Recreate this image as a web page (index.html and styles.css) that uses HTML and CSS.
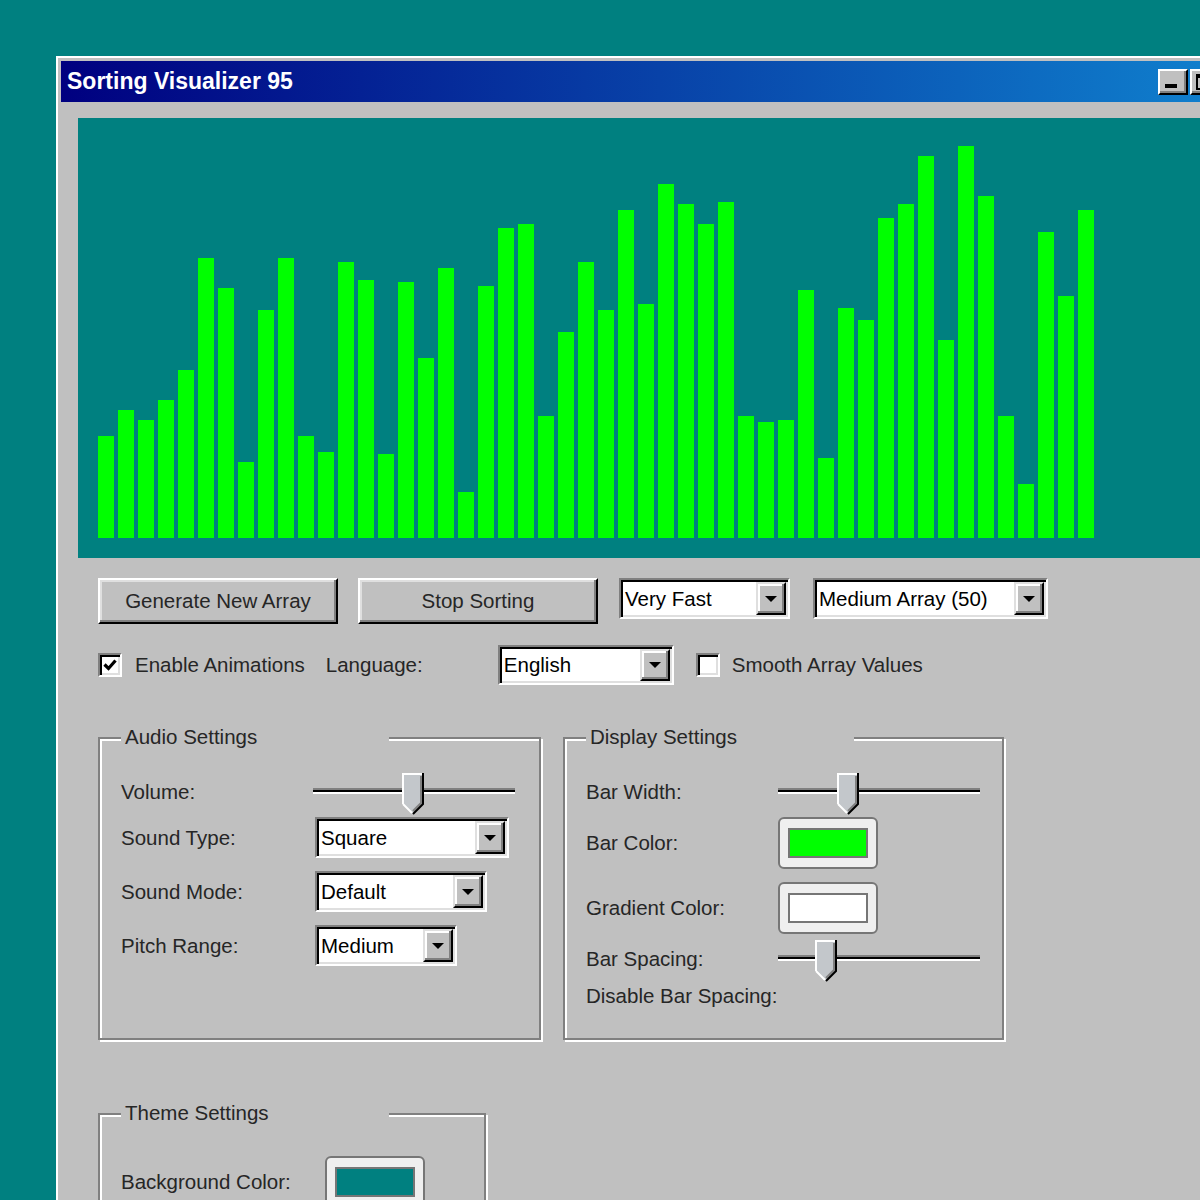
FILE: index.html
```html
<!DOCTYPE html>
<html lang="en">
<head>
    <meta charset="UTF-8">
    <meta name="viewport" content="width=device-width, initial-scale=1.0">
    <title>Sorting Visualizer 95</title>
    <link rel="stylesheet" href="styles.css">
</head>
<body>
    <div class="window">
        <div class="title-bar">
            <span class="title">Sorting Visualizer 95</span>
            <div class="title-buttons">
                <button class="title-btn" type="button"><span class="glyph-min"></span></button>
                <button class="title-btn" type="button"><span class="glyph-max"></span></button>
                <button class="title-btn title-close" type="button">
                    <svg width="14" height="12" viewBox="0 0 14 12"><path d="M2 1L12 11M12 1L2 11" stroke="#000" stroke-width="3"/></svg>
                </button>
            </div>
        </div>
        <div class="window-body">
            <div class="canvas" id="bars"></div>

            <div class="panel">
                <div class="row-actions">
                    <button class="btn" type="button">Generate New Array</button>
                    <button class="btn" type="button">Stop Sorting</button>
                    <div class="select select-speed"><span class="select-value">Very Fast</span><span class="select-arrow"></span></div>
                    <div class="select select-size"><span class="select-value">Medium Array (50)</span><span class="select-arrow"></span></div>
                </div>

                <div class="row-options">
                    <label class="check">
                        <span class="check-box">
                            <svg width="16" height="16" viewBox="0 0 16 16"><path d="M2.5 7.5L6.5 11.5L13.5 3.5" fill="none" stroke="#000" stroke-width="3.2"/></svg>
                        </span>
                        Enable Animations
                    </label>
                    <span class="lang-label">Language:</span>
                    <div class="select select-lang"><span class="select-value">English</span><span class="select-arrow"></span></div>
                    <label class="check check-smooth">
                        <span class="check-box"></span>
                        Smooth Array Values
                    </label>
                </div>

                <div class="groups">
                    <div class="group group-audio">
                        <span class="legend">Audio Settings</span>
                        <div class="fields">
                            <div class="field field-slider">
                                <span class="field-label">Volume:</span>
                                <div class="slider">
                                    <div class="slider-track"></div>
                                    <svg class="slider-thumb" style="left: 89px" width="22" height="42" viewBox="0 0 22 42">
                                        <path d="M1 1H21V31L11 41L1 31Z" fill="#c3c7cb"/>
                                        <path d="M1 31V1H20" fill="none" stroke="#fff" stroke-width="2"/>
                                        <path d="M19 3V30L11 38" fill="none" stroke="#808080" stroke-width="2"/>
                                        <path d="M21 0V31L11 41" fill="none" stroke="#000" stroke-width="2"/>
                                        <path d="M1 31L10 40" fill="none" stroke="#fff" stroke-width="2"/>
                                    </svg>
                                </div>
                            </div>
                            <div class="field">
                                <span class="field-label">Sound Type:</span>
                                <div class="select select-type"><span class="select-value">Square</span><span class="select-arrow"></span></div>
                            </div>
                            <div class="field">
                                <span class="field-label">Sound Mode:</span>
                                <div class="select select-mode"><span class="select-value">Default</span><span class="select-arrow"></span></div>
                            </div>
                            <div class="field">
                                <span class="field-label">Pitch Range:</span>
                                <div class="select select-pitch"><span class="select-value">Medium</span><span class="select-arrow"></span></div>
                            </div>
                        </div>
                    </div>

                    <div class="group group-display">
                        <span class="legend">Display Settings</span>
                        <div class="fields">
                            <div class="field field-slider">
                                <span class="field-label">Bar Width:</span>
                                <div class="slider">
                                    <div class="slider-track"></div>
                                    <svg class="slider-thumb" style="left: 59px" width="22" height="42" viewBox="0 0 22 42">
                                        <path d="M1 1H21V31L11 41L1 31Z" fill="#c3c7cb"/>
                                        <path d="M1 31V1H20" fill="none" stroke="#fff" stroke-width="2"/>
                                        <path d="M19 3V30L11 38" fill="none" stroke="#808080" stroke-width="2"/>
                                        <path d="M21 0V31L11 41" fill="none" stroke="#000" stroke-width="2"/>
                                        <path d="M1 31L10 40" fill="none" stroke="#fff" stroke-width="2"/>
                                    </svg>
                                </div>
                            </div>
                            <div class="field">
                                <span class="field-label">Bar Color:</span>
                                <input class="color-input" type="color" value="#00ff00">
                            </div>
                            <div class="field">
                                <span class="field-label">Gradient Color:</span>
                                <input class="color-input" type="color" value="#ffffff">
                            </div>
                            <div class="field field-slider">
                                <span class="field-label">Bar Spacing:</span>
                                <div class="slider">
                                    <div class="slider-track"></div>
                                    <svg class="slider-thumb" style="left: 37px" width="22" height="42" viewBox="0 0 22 42">
                                        <path d="M1 1H21V31L11 41L1 31Z" fill="#c3c7cb"/>
                                        <path d="M1 31V1H20" fill="none" stroke="#fff" stroke-width="2"/>
                                        <path d="M19 3V30L11 38" fill="none" stroke="#808080" stroke-width="2"/>
                                        <path d="M21 0V31L11 41" fill="none" stroke="#000" stroke-width="2"/>
                                        <path d="M1 31L10 40" fill="none" stroke="#fff" stroke-width="2"/>
                                    </svg>
                                </div>
                            </div>
                            <div class="field field-text">
                                <span class="field-label">Disable Bar Spacing:</span>
                            </div>
                        </div>
                    </div>
                </div>

                <div class="group group-theme">
                    <span class="legend">Theme Settings</span>
                    <div class="fields">
                        <div class="field">
                            <span class="field-label">Background Color:</span>
                            <input class="color-input" type="color" value="#008080">
                        </div>
                    </div>
                </div>
            </div>
        </div>
    </div>

    <script>
        const heights = [102, 128, 118, 138, 168, 280, 250, 76, 228, 280,
                         102, 86, 276, 258, 84, 256, 180, 270, 46, 252,
                         310, 314, 122, 206, 276, 228, 328, 234, 354, 334,
                         314, 336, 122, 116, 118, 248, 80, 230, 218, 320,
                         334, 382, 198, 392, 342, 122, 54, 306, 242, 328];

        const canvas = document.getElementById('bars');
        heights.forEach(h => {
            const bar = document.createElement('div');
            bar.className = 'bar';
            bar.style.height = h + 'px';
            canvas.appendChild(bar);
        });
    </script>
</body>
</html>
```

FILE: styles.css
```css
html, body {
    overflow: hidden;
}
body {
    margin: 0;
    background-color: #008080;
    font-family: "Liberation Sans", Arial, sans-serif;
    font-size: 20.5px;
    color: #262626;
}
.window {
    box-sizing: border-box;
    width: 1207px;
    min-height: 1300px;
    margin: 56px 0 0 56px;
    padding: 3px;
    background-color: #c0c0c0;
    border: 2px solid;
    border-color: #fff #000 #000 #fff;
}
.title-bar {
    display: flex;
    align-items: center;
    justify-content: space-between;
    height: 41px;
    padding: 0 4px 0 6px;
    background: linear-gradient(90deg, #000080, #1084d0);
}
.title {
    color: #fff;
    font-weight: bold;
    font-size: 23px;
}
.title-buttons {
    display: flex;
    gap: 2px;
}
.title-btn {
    position: relative;
    box-sizing: border-box;
    width: 30px;
    height: 26px;
    padding: 0;
    background-color: #c0c0c0;
    border: 2px solid;
    border-color: #fff #000 #000 #fff;
    box-shadow: inset -2px -2px #808080;
    display: flex;
    align-items: center;
    justify-content: center;
}
.title-close {
    margin-left: 2px;
}
.glyph-min {
    position: absolute;
    left: 5px;
    bottom: 5px;
    width: 12px;
    height: 4px;
    background-color: #000;
}
.glyph-max {
    box-sizing: border-box;
    width: 18px;
    height: 16px;
    border: 2px solid #000;
    border-top-width: 4px;
}

.window-body {
    padding: 16px 0 0 17px;
}
.canvas {
    box-sizing: border-box;
    height: 440px;
    padding: 0 20px 20px;
    display: flex;
    align-items: flex-end;
    gap: 4px;
    background-color: #008080;
}
.bar {
    width: 16px;
    flex: none;
    background-color: #00ff00;
}

.panel {
    padding: 20px 0 0 20px;
}
.row-actions {
    display: flex;
    align-items: flex-start;
    gap: 20px;
}
.btn {
    box-sizing: border-box;
    width: 240px;
    height: 46px;
    background-color: #c0c0c0;
    border: 2px solid;
    border-color: #fff #000 #000 #fff;
    box-shadow: inset -2px -2px #808080, inset 2px 2px #dfdfdf;
    font-family: inherit;
    font-size: 20.5px;
    color: #262626;
    padding: 0;
}

/* win95 style drop down */
.select {
    box-sizing: border-box;
    display: flex;
    align-items: stretch;
    height: 41px;
    padding: 2px;
    background-color: #fff;
    border: 2px solid;
    border-color: #808080 #fff #fff #808080;
    box-shadow: inset 2px 2px #000, inset -2px -2px #dfdfdf;
}
.select-value {
    flex: 1;
    display: flex;
    align-items: center;
    padding-left: 2px;
    color: #000;
    white-space: nowrap;
    overflow: hidden;
}
.select-arrow {
    box-sizing: border-box;
    width: 30px;
    flex: none;
    background-color: #c0c0c0;
    border: 2px solid;
    border-color: #dfdfdf #000 #000 #dfdfdf;
    box-shadow: inset -2px -2px #808080, inset 2px 2px #fff;
    display: flex;
    align-items: center;
    justify-content: center;
}
.select-arrow::after {
    content: "";
    border-left: 6px solid transparent;
    border-right: 6px solid transparent;
    border-top: 6px solid #000;
}
.select-speed { width: 171px; margin-left: 1px; }
.select-size { width: 235px; margin-left: 3px; }
.select-lang { width: 176px; height: 40px; }
.select-type { width: 194px; margin-left: 2px; }
.select-mode { width: 172px; margin-left: 2px; }
.select-pitch { width: 142px; margin-left: 2px; }

.row-options {
    display: flex;
    align-items: center;
    margin-top: 21px;
}
.check {
    display: flex;
    align-items: center;
    gap: 13px;
    margin-right: 21px;
}
.check-smooth {
    margin-left: 22px;
    gap: 12px;
}
.check-box {
    box-sizing: border-box;
    width: 24px;
    height: 24px;
    background-color: #fff;
    border: 2px solid;
    border-color: #808080 #fff #fff #808080;
    box-shadow: inset 2px 2px #000, inset -2px -2px #dfdfdf;
    display: flex;
    align-items: center;
    justify-content: center;
}
.lang-label {
    width: 172px;
}

.groups {
    display: flex;
    align-items: flex-start;
    gap: 22px;
    margin-top: 52px;
}
.group {
    position: relative;
    box-sizing: border-box;
    border: 2px solid #808080;
    box-shadow: inset 2px 2px #fff, 2px 2px #fff;
    padding: 41px 20px 0 21px;
}
.group-audio {
    width: 443px;
    height: 303px;
}
.group-display {
    width: 441px;
    height: 303px;
}
.group-theme {
    width: 388px;
    height: 200px;
    margin-top: 73px;
}
.legend {
    position: absolute;
    top: -15px;
    left: 21px;
    box-sizing: border-box;
    width: 268px;
    padding-left: 4px;
    line-height: 26px;
    background-color: #c0c0c0;
}
.fields {
    display: flex;
    flex-direction: column;
    gap: 13px;
}
.field {
    display: flex;
    align-items: center;
}
.field-label {
    width: 192px;
    flex: none;
    white-space: nowrap;
}
.group-theme .field-label {
    width: 204px;
}
.field-slider,
.field-text {
    height: 24px;
}

.slider {
    position: relative;
    width: 202px;
    height: 24px;
}
.slider-track {
    position: absolute;
    left: 0;
    right: 0;
    top: 8px;
    height: 2px;
    background-color: #000;
    border-top: 2px solid #808080;
    border-bottom: 2px solid #fff;
}
.slider-thumb {
    position: absolute;
    top: -7px;
}

.color-input {
    box-sizing: border-box;
    width: 100px;
    height: 52px;
    padding: 9px 8px;
    margin: 0;
    background-color: #efefef;
    border: 2px solid #767676;
    border-radius: 6px;
}
.color-input::-webkit-color-swatch-wrapper {
    padding: 0;
}
.color-input::-webkit-color-swatch {
    border: 2px solid #767676;
    border-radius: 0;
}
```
